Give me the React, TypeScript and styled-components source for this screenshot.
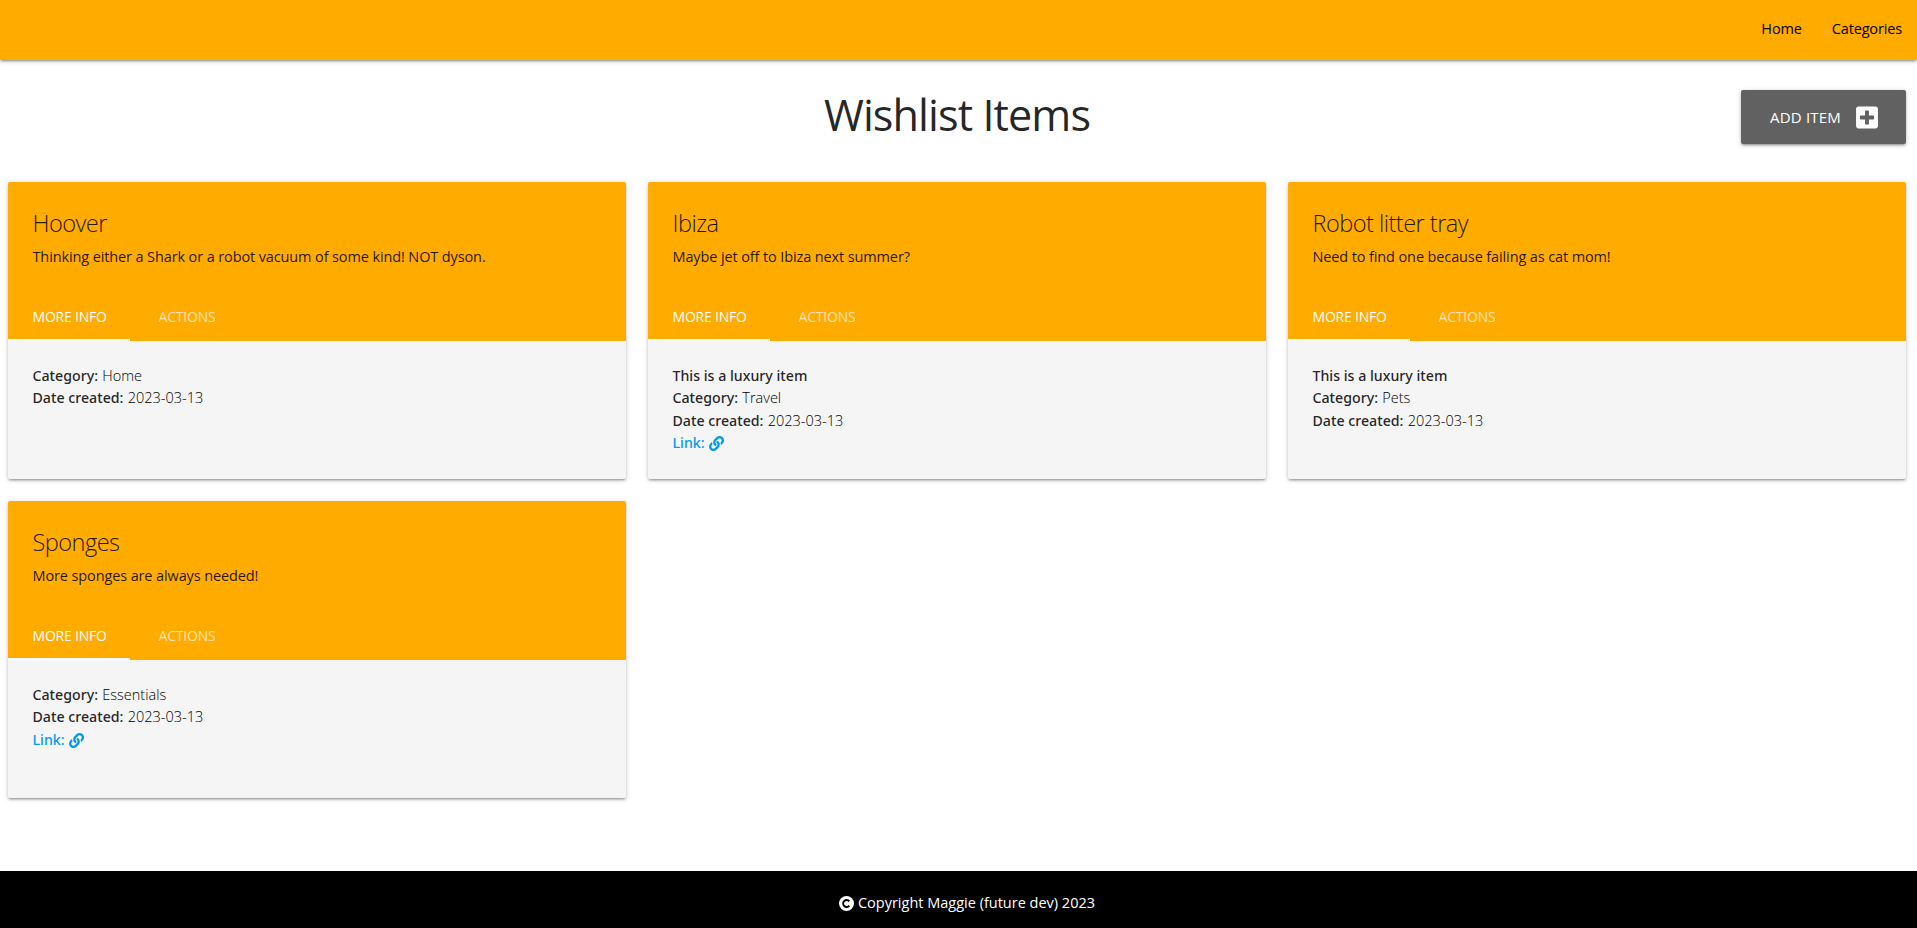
import React from 'react';
import styled, { createGlobalStyle } from 'styled-components';

const GlobalStyle = createGlobalStyle`
  *, *::before, *::after { box-sizing: border-box; }
  body {
    margin: 0;
    background: #fff;
    color: rgba(0, 0, 0, 0.87);
    font-family: 'Open Sans', 'Noto Sans', sans-serif;
    font-size: 14.5px;
    line-height: 22.4px;
  }
  a { color: inherit; text-decoration: none; }
  h1, h2, p { margin: 0; font-weight: 400; }
`;

const raised = `box-shadow: 0 2px 2px 0 rgba(0, 0, 0, 0.14), 0 3px 1px -2px rgba(0, 0, 0, 0.12),
    0 1px 5px 0 rgba(0, 0, 0, 0.2);`;

const Page = styled.div`
  display: flex;
  flex-direction: column;
  min-height: 100vh;
`;

const Nav = styled.nav`
  display: flex;
  justify-content: flex-end;
  height: 60px;
  background: #ffab00;
  ${raised}
`;

const NavLink = styled.a`
  padding: 0 15px;
  color: #000;
  line-height: 58px;
  letter-spacing: -0.15px;
`;

const Heading = styled.header`
  display: grid;
  grid-template-columns: 1fr auto 1fr;
  align-items: start;
  padding: 30px 11px 0 8px;
  height: 122px;
`;

const PageTitle = styled.h1`
  grid-column: 2;
  margin-top: 1px;
  font-size: 43.2px;
  line-height: 48px;
  letter-spacing: -0.93px;
`;

const AddButton = styled.a`
  grid-column: 3;
  justify-self: end;
  display: flex;
  align-items: center;
  justify-content: space-between;
  width: 165px;
  height: 54px;
  padding: 1px 28px 0 29px;
  border-radius: 2px;
  background: #616161;
  color: #fff;
  font-size: 15px;
  letter-spacing: 0.2px;
  ${raised}

  svg { margin-top: -1px; }
`;

const CardGrid = styled.main`
  display: grid;
  grid-template-columns: repeat(3, 1fr);
  gap: 22px;
  padding: 0 11px 0 8px;
`;

const CardBox = styled.article`
  height: 297px;
  overflow: hidden;
  border-radius: 2px;
  background: #f5f5f5;
  ${raised}
`;

const CardHeader = styled.div`
  display: flex;
  flex-direction: column;
  height: 159px;
  padding-top: 23px;
  background: #ffab00;
`;

const CardTitle = styled.h2`
  padding: 0 24.5px;
  font-size: 23.6px;
  font-weight: 300;
  line-height: 36px;
  letter-spacing: -0.55px;
`;

const Description = styled.p`
  padding: 5px 24.5px 0;
  letter-spacing: -0.12px;
`;

const Tabs = styled.div`
  display: flex;
  margin-top: auto;
`;

const Tab = styled.a<{ $active?: boolean }>`
  height: 48px;
  padding: 0 ${(p) => (p.$active ? 22 : 28)}px 0 ${(p) => (p.$active ? 24.5 : 28.5)}px;
  width: ${(p) => (p.$active ? '122px' : 'auto')};
  border-bottom: 2px solid ${(p) => (p.$active ? '#fff' : 'transparent')};
  color: ${(p) => (p.$active ? '#fff' : 'rgba(255, 255, 255, 0.7)')};
  font-size: 14px;
  line-height: 48px;
  letter-spacing: -0.2px;
`;

const Details = styled.div`
  padding: 24px 24.5px;
`;

const Label = styled.span`
  margin-right: 0.5px;
  font-family: 'Noto Sans', sans-serif;
  font-size: 14.2px;
  font-weight: 500;
`;

const Value = styled.span`
  color: #000;
  font-weight: 300;
`;

const ItemLink = styled.a`
  display: flex;
  align-items: center;
  gap: 4px;
  color: #039be5;
  font-family: 'Noto Sans', sans-serif;
  font-size: 14.2px;
  font-weight: 500;
`;

const Footer = styled.footer`
  display: flex;
  align-items: center;
  justify-content: center;
  gap: 4px;
  height: 57px;
  margin-top: auto;
  padding: 7px 0 0 17px;
  background: #000;
  color: #fff;
`;

const PlusSquare = () => (
  <svg width="22" height="25" viewBox="0 0 448 512" fill="currentColor">
    <path d="M400 32H48C21.500 32 0 53.500 0 80v352c0 26.500 21.500 48 48 48h352c26.500 0 48-21.500 48-48V80c0-26.500-21.500-48-48-48zm-32 252c0 6.600-5.400 12-12 12h-92v92c0 6.600-5.400 12-12 12h-56c-6.600 0-12-5.400-12-12v-92H92c-6.600 0-12-5.400-12-12v-56c0-6.600 5.400-12 12-12h92v-92c0-6.600 5.400-12 12-12h56c6.600 0 12 5.400 12 12v92h92c6.600 0 12 5.400 12 12v56z" />
  </svg>
);

const ChainIcon = () => (
  <svg width="15" height="15" viewBox="0 0 512 512" fill="currentColor">
    <path d="M326.612 185.391c59.747 59.809 58.927 155.698.36 214.59-.11.12-.24.25-.36.37l-67.200 67.200c-59.270 59.270-155.699 59.262-214.960 0-59.270-59.260-59.270-155.700 0-214.960l37.106-37.106c9.840-9.840 26.786-3.300 27.294 10.606.648 17.722 3.826 35.527 9.690 52.721 1.986 5.822.567 12.262-3.783 16.612l-13.087 13.087c-28.026 28.026-28.905 73.660-1.155 101.960 28.024 28.579 74.086 28.749 102.325.51l67.200-67.190c28.191-28.191 28.073-73.757 0-101.830-3.701-3.694-7.429-6.564-10.341-8.569a16.037 16.037 0 0 1-6.947-12.606c-.396-10.567 3.348-21.456 11.698-29.806l21.054-21.055c5.521-5.521 14.182-6.199 20.584-1.731a152.482 152.482 0 0 1 20.522 17.197zM467.547 44.449c-59.261-59.262-155.690-59.270-214.960 0l-67.200 67.200c-.12.12-.25.25-.36.37-58.566 58.892-59.387 154.781.36 214.590a152.454 152.454 0 0 0 20.521 17.196c6.402 4.468 15.064 3.789 20.584-1.731l21.054-21.055c8.350-8.350 12.094-19.239 11.698-29.806a16.037 16.037 0 0 0-6.947-12.606c-2.912-2.005-6.640-4.875-10.341-8.569-28.073-28.073-28.191-73.639 0-101.830l67.200-67.190c28.239-28.239 74.300-28.069 102.325.51 27.750 28.300 26.872 73.934-1.155 101.960l-13.087 13.087c-4.350 4.350-5.769 10.790-3.783 16.612 5.864 17.194 9.042 34.999 9.690 52.721.509 13.906 17.454 20.446 27.294 10.606l37.106-37.106c59.271-59.259 59.271-155.699.001-214.959z" />
  </svg>
);

const CopyrightIcon = () => (
  <svg width="15" height="15" viewBox="0 0 16 16" fill="none">
    <circle cx="8" cy="8" r="8" fill="#fff" />
    <path d="M11 10.300A3.700 3.700 0 1 1 11 5.700" stroke="#000" strokeWidth="2" />
  </svg>
);

type Item = {
  title: string;
  description: string;
  category: string;
  luxury?: boolean;
  link?: boolean;
};

const items: Item[] = [
  {
    title: 'Hoover',
    description: 'Thinking either a Shark or a robot vacuum of some kind! NOT dyson.',
    category: 'Home',
  },
  {
    title: 'Ibiza',
    description: 'Maybe jet off to Ibiza next summer?',
    category: 'Travel',
    luxury: true,
    link: true,
  },
  {
    title: 'Robot litter tray',
    description: 'Need to find one because failing as cat mom!',
    category: 'Pets',
    luxury: true,
  },
  {
    title: 'Sponges',
    description: 'More sponges are always needed!',
    category: 'Essentials',
    link: true,
  },
];

const ItemCard = ({ item }: { item: Item }) => (
  <CardBox>
    <CardHeader>
      <CardTitle>{item.title}</CardTitle>
      <Description>{item.description}</Description>
      <Tabs>
        <Tab $active>MORE INFO</Tab>
        <Tab>ACTIONS</Tab>
      </Tabs>
    </CardHeader>
    <Details>
      {item.luxury && (
        <p>
          <Label>This is a luxury item</Label>
        </p>
      )}
      <p>
        <Label>Category:</Label> <Value>{item.category}</Value>
      </p>
      <p>
        <Label>Date created:</Label> <Value>2023-03-13</Value>
      </p>
      {item.link && (
        <ItemLink>
          Link: <ChainIcon />
        </ItemLink>
      )}
    </Details>
  </CardBox>
);

export default function App() {
  return (
    <>
      <GlobalStyle />
      <Page>
        <Nav>
          <NavLink>Home</NavLink>
          <NavLink>Categories</NavLink>
        </Nav>
        <Heading>
          <PageTitle>Wishlist Items</PageTitle>
          <AddButton>
            ADD ITEM <PlusSquare />
          </AddButton>
        </Heading>
        <CardGrid>
          {items.map((item) => (
            <ItemCard key={item.title} item={item} />
          ))}
        </CardGrid>
        <Footer>
          <CopyrightIcon />
          Copyright Maggie (future dev) 2023
        </Footer>
      </Page>
    </>
  );
}
